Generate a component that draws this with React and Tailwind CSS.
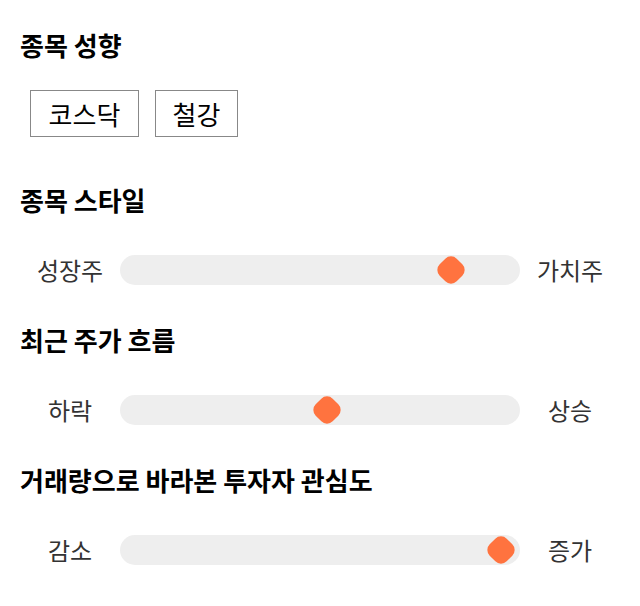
import React from "react";

const font = { fontFamily: '"Noto Sans CJK KR", "Noto Sans", sans-serif' };

function Slider({ left, right, pos }) {
  return (
    <div className="mt-[37px] flex h-[30px] items-center">
      <div className="w-[100px] text-center text-[24px] leading-[30px] text-[#333]">{left}</div>
      <div className="relative h-[30px] flex-1 rounded-full bg-[#eeeeee]">
        <div
          className="absolute top-[3px] h-[24px] w-[24px] -translate-x-1/2 rotate-45 rounded-[8px] bg-[#ff733f]"
          style={{ left: `${pos}px` }}
        />
      </div>
      <div className="w-[100px] text-center text-[24px] leading-[30px] text-[#333]">{right}</div>
    </div>
  );
}

function Heading({ children, className = "" }) {
  return (
    <h2 className={`text-[26px] font-bold leading-[36px] text-black ${className}`}>{children}</h2>
  );
}

export default function App() {
  return (
    <div className="h-[606px] w-[640px] bg-white px-[20px] pt-[27px]" style={font}>
      <Heading>종목 성향</Heading>
      <div className="ml-[10px] mt-[27px] flex gap-[16px]">
        <div className="w-[109px] border border-[#888] py-[7px] text-center text-[26px] leading-[31px] text-black">코스닥</div>
        <div className="w-[83px] border border-[#888] py-[7px] text-center text-[26px] leading-[31px] text-black">철강</div>
      </div>
      <Heading className="mt-[45px]">종목 스타일</Heading>
      <Slider left="성장주" right="가치주" pos={331} />
      <Heading className="mt-[37px]">최근 주가 흐름</Heading>
      <Slider left="하락" right="상승" pos={207} />
      <Heading className="mt-[37px]">거래량으로 바라본 투자자 관심도</Heading>
      <Slider left="감소" right="증가" pos={381} />
    </div>
  );
}
